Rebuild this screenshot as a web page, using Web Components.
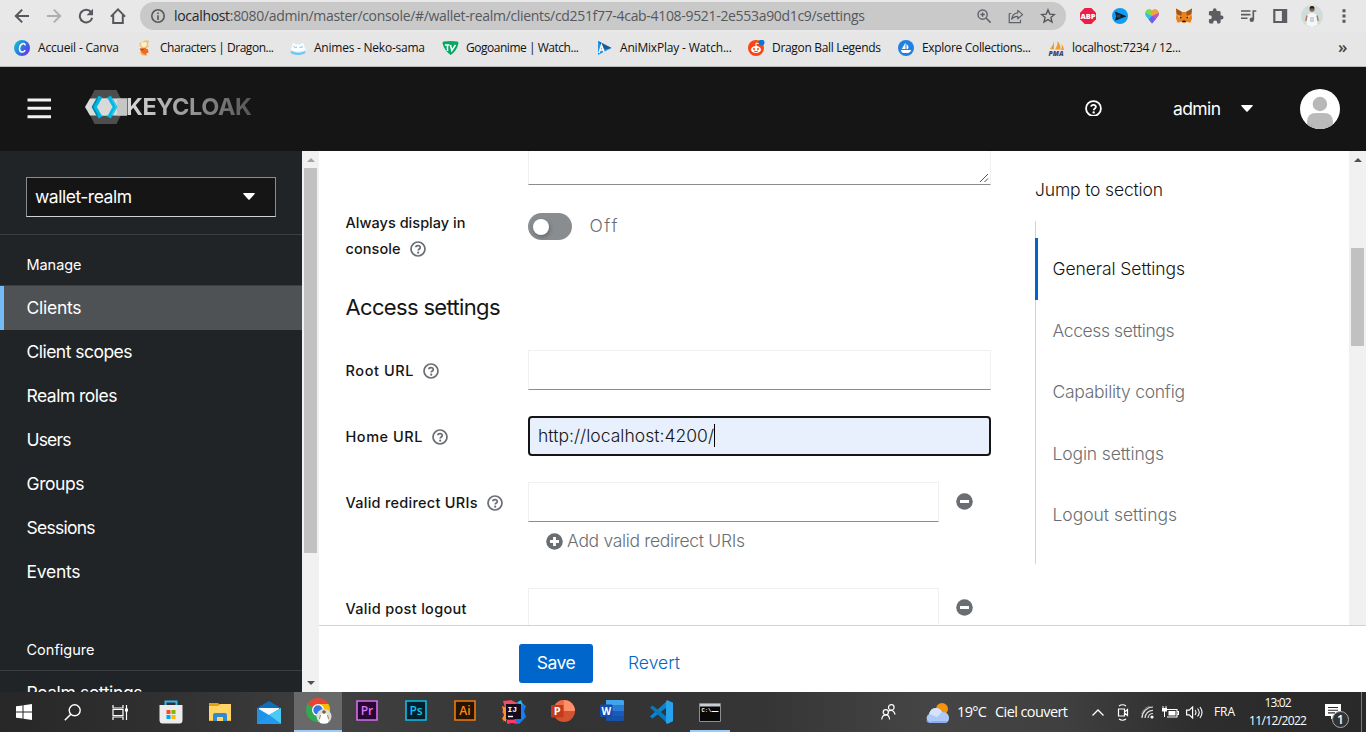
<!DOCTYPE html>
<html lang="en">
<head>
<meta charset="utf-8">
<title>Keycloak Administration UI</title>
<style>
html,body{margin:0;height:732px;overflow:hidden}
body{display:flex;flex-direction:column;width:1366px;background:#fff;font-family:"Open Sans","Noto Sans",sans-serif}
.workspace{display:flex;height:541px;flex:none}
.page{display:flex;flex-direction:column;width:1047px}
.scroll-row{display:flex;height:474px;overflow:hidden}
</style>
</head>
<body>
<browser-toolbar></browser-toolbar>
<bookmark-bar>
  <bookmark-item icon="canva" w="81">Accueil - Canva</bookmark-item>
  <bookmark-item icon="goku" w="114">Characters | Dragon...</bookmark-item>
  <bookmark-item icon="neko" w="111">Animes - Neko-sama</bookmark-item>
  <bookmark-item icon="gogo" w="113">Gogoanime | Watch...</bookmark-item>
  <bookmark-item icon="animix" w="112">AniMixPlay - Watch...</bookmark-item>
  <bookmark-item icon="reddit" w="109">Dragon Ball Legends</bookmark-item>
  <bookmark-item icon="opensea" w="109">Explore Collections...</bookmark-item>
  <bookmark-item icon="pma" w="109">localhost:7234 / 12...</bookmark-item>
</bookmark-bar>
<kc-masthead></kc-masthead>
<div class="workspace">
  <kc-sidebar></kc-sidebar>
  <scroll-bar top="17" thumb="385" full dim></scroll-bar>
  <div class="page">
    <div class="scroll-row">
      <kc-form></kc-form>
      <jump-links></jump-links>
      <scroll-bar top="97" thumb="98"></scroll-bar>
    </div>
    <action-bar></action-bar>
  </div>
</div>
<task-bar></task-bar>
<script>
const ICONS = {
back:[16,16,'<path d="M15 8H2M8.2 1.6 1.8 8l6.4 6.4" fill="none" stroke="#55585c" stroke-width="2"/>'],
forward:[16,16,'<path d="M1 8h13M7.8 1.6 14.2 8l-6.4 6.4" fill="none" stroke="#aeafb1" stroke-width="2"/>'],
reload:[16,16,'<path d="M13.2 4.4A6.3 6.3 0 1 0 14.2 9.8" fill="none" stroke="#55585c" stroke-width="2"/><path d="M15 .8v6.4H8.6z" fill="#55585c"/>'],
home:[16,16,'<path d="M.9 8.6 8 1.4l7.1 7.2M3.2 7v8h9.6V7" fill="none" stroke="#55585c" stroke-width="2"/>'],
info:[16,16,'<circle cx="8" cy="8" r="6.2" fill="none" stroke="#55585c" stroke-width="1.6"/><path d="M7.2 7.2h1.6V12H7.2zM7.2 4.4h1.6V6H7.2z" fill="#55585c"/>'],
zoom:[16,16,'<circle cx="6.6" cy="6.6" r="4.6" fill="none" stroke="#5f6368" stroke-width="1.4"/><path d="M10 10l4.6 4.6M4.4 6.6h4.4M6.6 4.4v4.4" stroke="#5f6368" stroke-width="1.5"/>'],
share:[16,16,'<path d="M1.2 5.5v9.2h11.3v-3M1.2 5.5h2" fill="none" stroke="#5f6368" stroke-width="1.2"/><path d="M9.8 2.4 14.6 6.6 9.8 10.8V8.4C6.8 8.3 5 9.3 3.6 11.2 4 7.6 6.2 5.2 9.8 4.8z" fill="none" stroke="#5f6368" stroke-width="1.2" stroke-linejoin="round"/>'],
star:[16,16,'<path d="m8 1.9 1.8 4.2 4.6.4-3.5 3 1.1 4.5L8 11.6 4 14l1.1-4.5-3.5-3 4.6-.4z" fill="none" stroke="#55585c" stroke-width="1.4"/>'],
abp:[18,16,'<path d="M5.7 0h6.6L17 4.7v6.6L12.3 16H5.7L1 11.3V4.7z" fill="#ed1e45"/><text x="9" y="10.8" font-size="7.4" font-weight="800" font-family="Open Sans,sans-serif" fill="#fff" text-anchor="middle">ABP</text>'],
play:[16,16,'<circle cx="8" cy="8" r="8" fill="#129bf5"/><path d="m3 3.5 11.5 4.7L3 12.8l1.1-4.6z" fill="#101c28"/><path d="M4.5 6.4h4v3.4h-4z" fill="#2b4258"/>'],
heart:[16,16,'<path d="M8 15.5 1.8 8C-.6 4 4.4-1 8 2.7 11.6-1 16.6 4 14.2 8z" fill="#27c3e8"/><path d="M8 2.7C5-.5 1.5 2 1.2 4.8L8 8z" fill="#8dd44b"/><path d="M8 2.7C11-.5 14.8 2 15 5L8 8z" fill="#f2a33c"/><path d="M15 5c.1 2-.9 3.2-1.6 4L8 15.5V8z" fill="#cf4fc7"/><path d="m8 8 4 2.7-4 4.8-3.3-4z" fill="#6d63e8"/>'],
fox:[18,16,'<path d="M1 .5 7 4h4l6-3.5L16.4 6l.7 4-1.6 4.8-4-1-1.3 1.2H7.8l-1.3-1.2-4 1L.9 10l.7-4z" fill="#e8821e"/><path d="M1 .5 7 4 6 8 1.6 6zM17 .5 11 4l1 4 4.4-2z" fill="#a3561f"/><path d="m1.8 7 4.700 1L5 11zM16.200 7l-4.700 1L13 11z" fill="#f5a04c"/><path d="M7.600 12.400h2.800l.4 1.600H7.200zM5 8.600l2 1.200-2 .6zM13 8.600l-2 1.200 2 .6z" fill="#222"/>'],
puzzle:[16,16,'<path d="M13.600 7.600h-1V4.300a1.400 1.400 0 0 0-1.400-1.400H8.600V2.200a1.900 1.900 0 0 0-3.800 0v.7H2.300A1.400 1.400 0 0 0 .9 4.300v2.900h.9a2 2 0 0 1 0 4H.9V14a1.400 1.400 0 0 0 1.400 1.400h2.900v-1a2 2 0 0 1 4 0v1h2a1.400 1.400 0 0 0 1.400-1.400v-2.600h1a1.900 1.900 0 0 0 0-3.800z" fill="#5a5d61"/>'],
music:[17,16,'<path d="M1 3h9.500M1 6.600h9.500M1 10.200h6.500" stroke="#5a5d61" stroke-width="1.600"/><path d="M13.300 11.500V3h3" fill="none" stroke="#5a5d61" stroke-width="1.700"/><circle cx="11.800" cy="11.700" r="2.200" fill="#5a5d61"/>'],
panel:[16,16,'<path d="M1.200 1h14v14h-14zM3.400 3v10h6.500V3z" fill="#5a5d61" fill-rule="evenodd"/>'],
face:[22,22,'<circle cx="11" cy="11" r="11" fill="#cfdcda"/><path d="M5.500 20 6 10.500l3-2.500h4l3 2.500.5 9.500-5.500 2z" fill="#f4f7f8"/><path d="M6 10.500 4.800 16M16 10.500l1.200 5.500" stroke="#a67c62" stroke-width="1.400"/><circle cx="11" cy="4.200" r="2.500" fill="#8c6044"/><path d="M8.500 3.500a2.500 2.500 0 0 1 5 0z" fill="#1b1b1f"/><path d="M9 12h4v5H9z" fill="#cbd3dc"/>'],
dots:[4,16,'<path d="M.5 1.300h3v3h-3zM.5 6.500h3v3h-3zM.5 11.700h3v3h-3z" fill="#55585c"/>'],
canva:[16,16,'<defs><linearGradient id="g" x1="0" x2="1" y1=".3" y2=".9"><stop stop-color="#12bdd2"/><stop offset=".55" stop-color="#356be0"/><stop offset="1" stop-color="#7a28e8"/></linearGradient></defs><circle cx="8" cy="8" r="8" fill="url(#g)"/><path d="M11 5.500c.6-3.200-5-2.500-5.500 2.700-.3 4.300 3.700 5 5.700 2" fill="none" stroke="#fff" stroke-width="1.500"/>'],
goku:[16,16,'<path d="M3 3 6 2.500 8 .800l3-.5 2 1L12 4l.6 2.500L9.500 9 6 8.500 4.500 6.500z" fill="#f0c06a"/><path d="m5 3 3-1 3 .500L10.500 6 8 7.500 5.500 6z" fill="#fdf0d2"/><path d="m4 9 5-1 3 1.500.5 3-2.500 1 1 2-4.500-1.500L5 12z" fill="#ee6a1c"/><path d="m3.500 8.500 5 .3-2.500 2z" fill="#c5401a"/><path d="m3.500 12 3 1 4 2.700-4.500-.5z" fill="#f8b13c"/>'],
neko:[17,16,'<ellipse cx="8" cy="12" rx="7.500" ry="3" fill="#67c9f3"/><path d="M1.500 7 3 2.500l3 2h4l3-2L14.500 7l1.500 3.500q-8 4-15 0z" fill="#fbfeff"/><path d="M3.500 6.500l2 1 1.500-.5M9.500 7l1.500.5 2-1" stroke="#83bedb" fill="none"/><path d="M1 10.500q7 3.500 14.500 0" stroke="#bfe6f7" fill="none"/>'],
gogo:[17,16,'<path d="M1.500 1.600Q8.500.4 15.500 1.600q1.200.4.9 2Q15 11 8.700 15 2.500 11 .6 3.600.4 2 1.500 1.600z" fill="#08a862"/><path d="M3 5h4.500M5.500 5v6M8.500 5l1.300 5.500L13.500 4.800" stroke="#fff" stroke-width="1.500" fill="none"/>'],
animix:[16,16,'<path d="M2 1 15.500 8 2 15z" fill="#1f95ee"/><path d="M2 1 15.500 8 9 9.500z" fill="#1e5990"/><path d="M3 13 5.500 5 8 12M4 10h3.500" stroke="#fff" stroke-width="1.500" fill="none"/>'],
reddit:[17,16,'<circle cx="8" cy="8" r="8" fill="#fb4411"/><ellipse cx="8" cy="9.500" rx="5" ry="3.600" fill="#fff"/><path d="M8 6V3l3 .6" stroke="#fff" fill="none"/><circle cx="6" cy="9" r="1" fill="#fb4411"/><circle cx="10" cy="9" r="1" fill="#fb4411"/><path d="M6 11q2 1.300 4 0" stroke="#fb4411" fill="none"/><circle cx="13.500" cy="2.600" r="3" fill="#0b77d3"/>'],
opensea:[16,16,'<circle cx="8" cy="8" r="8" fill="#2081e2"/><path d="M7.500 2.500V9H3.800zM8.500 4q3 2.500 1.500 5H8.500zM2.800 10h10.400q-1.200 3-3 3H5q-1.700-.5-2.200-3z" fill="#fff"/>'],
pma:[17,16,'<path d="M2 9Q5.500 5 6 1v8.500zM7 9.500Q10 5 9.500 1 13 5 12.500 9.500zM13 10q1.500-3 .5-6 2.500 3 2.500 6z" fill="#f59a2d"/><text x="8" y="15.500" text-anchor="middle" font-size="6.800" font-weight="800" font-style="italic" font-family="Open Sans,sans-serif" fill="#3d4272" textLength="15" lengthAdjust="spacingAndGlyphs">PMA</text>'],
burger:[24,21,'<path d="M.5 2H24M.5 10.300H24M.5 18.700H24" stroke="#f2f2f2" stroke-width="3"/>'],
logo:[42,34,'<path d="M9.500 0h22L40 17l-8.500 17h-22L1 17z" fill="#4d4d4d"/><path d="M5 8.500h37v17H5L0 17z" fill="#dcdcdc"/><path d="M32 8.500h10v17H32z" fill="#c6c6c6"/><path d="m12 17 5-8.500h9L31 17l-5 8.500h-9z" fill="#d9d9d9"/><path d="m15.500 6.500-6 10.500 6 10.500" fill="none" stroke="#00b8e3" stroke-width="4.200"/><path d="m12.500 8-5 9 5 9" stroke="#008aaa" stroke-width="1.600" fill="none"/><path d="m24 6.500 6 10.500-6 10.500" fill="none" stroke="#00b8e3" stroke-width="4.200"/><path d="m27 9 4.500 8-4.500 8" stroke="#33c6e9" stroke-width="1.600" fill="none"/>'],
help:[16,16,'<circle cx="8" cy="8" r="7" fill="none" stroke="currentColor" stroke-width="1.700"/><path d="M5.800 6.300C6 4 10.400 4 10.300 6.600 10.200 8 8.200 8 8.200 9.600" fill="none" stroke="currentColor" stroke-width="1.700"/><circle cx="8.200" cy="11.700" r="1.100" fill="currentColor"/>'],
caret:[12,7,'<path d="M.8 0h10.400q1 .2.400 1L6.700 6.600q-.7.500-1.400 0L.4 1Q-.2.200.8 0z" fill="#fff"/>'],
avatar:[40,40,'<defs><clipPath id="c"><circle cx="20" cy="20" r="20"/></clipPath></defs><g clip-path="url(#c)"><path d="M0 0h40v40H0z" fill="#fff"/><path d="M7 40V33q0-9 9-9h8q9 0 9 9v7z" fill="#bbb"/><path d="M13 33l-2 4 3 4h-4zM27 33l2 4-3 4h4z" fill="#a6a6a6"/><circle cx="20" cy="15" r="7.200" fill="#b8b8b8"/><path d="M15 10a7 7 0 0 0 1 11 8 8 0 0 1-1-11" fill="#aaa"/></g>'],
minus:[17,17,'<circle cx="8.500" cy="8.500" r="8.300" fill="#6a6e73"/><path d="M4 8.500h9" stroke="#fff" stroke-width="3"/>'],
plus:[17,17,'<circle cx="8.500" cy="8.500" r="8.300" fill="#6a6e73"/><path d="M4 8.500h9M8.500 4v9" stroke="#fff" stroke-width="2.800"/>'],
grip:[10,10,'<path d="M1 9 9 1M5.500 9 9 5.500" stroke="#555" stroke-width="1"/>'],
start:[16,16,'<path d="M0 2.300 6.500 1.400V7.500H0zM7.500 1.200 16 0v7.500H7.500zM0 8.500h6.500v6.100L0 13.700zM7.500 8.500H16V16l-8.500-1.200z" fill="#fff"/>'],
search:[17,17,'<circle cx="10.700" cy="6.300" r="5.500" fill="none" stroke="#fff" stroke-width="1.400"/><path d="M6.800 10.200.8 16.200" stroke="#fff" stroke-width="1.500"/>'],
taskview:[17,17,'<path d="M1 1v3h10V1M1 16v-3h10v3M1 5.500v6h10v-6zM14.500 1v15" fill="none" stroke="#fff" stroke-width="1.200"/><path d="M13 4.500h3v3h-3z" fill="#fff"/>'],
store:[24,24,'<path d="M6.500 7V1.500h11V7" fill="none" stroke="#32b8f2" stroke-width="2"/><path d="M.5 5h23v15q0 3.500-3 3.500h-17q-3 0-3-3.500z" fill="#ececec"/><path d="M7.500 10h4v4h-4z" fill="#f25022"/><path d="M12.500 10h4v4h-4z" fill="#7fba00"/><path d="M7.500 15h4v4h-4z" fill="#00a4ef"/><path d="M12.500 15h4v4h-4z" fill="#ffb900"/>'],
explorer:[22,18,'<path d="M0 0h9l2 2h11v3H0z" fill="#e39f0c"/><path d="M0 3h9l2-2h11v17H0z" fill="#fed566"/><path d="M4 18v-6q0-2 2-2h10q2 0 2 2v6h-4v-4H8v4z" fill="#2e8bd3"/><path d="M0 17h4v1H0zM18 17h4v1h-4z" fill="#f2b833"/>'],
mail:[24,23,'<path d="M0 7 12 0l12 7v4H0z" fill="#0f6dba"/><path d="M2 7h20v8H2z" fill="#f5f9fc"/><path d="M0 7 12 14 24 7v16H0z" fill="#1f91e6"/><path d="m24 7-12 7 12 9z" fill="#4acbf5"/><path d="M0 23 12 14l12 9z" fill="#2299ef"/>'],
chrome:[26,26,'<circle cx="12" cy="12" r="12" fill="#33a852"/><path d="M12 12 1.600 6A12 12 0 0 1 22.400 6z" fill="#ea4335"/><path d="M12 6h10.400A12 12 0 0 1 12 24l5.200-9z" fill="#fbbc05"/><circle cx="12" cy="12" r="6" fill="#fff"/><circle cx="12" cy="12" r="4.700" fill="#3577e5"/><circle cx="18" cy="18.500" r="7.500" fill="#d7dfde"/><path d="M14 25v-8l3-2h2l3 2v8z" fill="#fff"/><path d="m14.500 17-1 4M21.500 17l1 4" stroke="#a67c62"/><circle cx="18" cy="14" r="1.800" fill="#80573f"/>'],
pr:[22,21,'<path d="M1 1h20v19H1z" fill="#2a0634" stroke="#d46df0" stroke-width="1.600"/><text x="11" y="15" text-anchor="middle" font-size="12" font-weight="600" font-family="Open Sans,sans-serif" fill="#d978f5">Pr</text>'],
ps:[22,21,'<path d="M1 1h20v19H1z" fill="#021f2b" stroke="#0dbce8" stroke-width="1.600"/><text x="11" y="15" text-anchor="middle" font-size="12" font-weight="600" font-family="Open Sans,sans-serif" fill="#12c4f3">Ps</text>'],
ai:[22,21,'<path d="M1 1h20v19H1z" fill="#261300" stroke="#ef7b0b" stroke-width="1.600"/><text x="11" y="15" text-anchor="middle" font-size="12" font-weight="600" font-family="Open Sans,sans-serif" fill="#ff860f">Ai</text>'],
ij:[24,24,'<path d="m1 1 8-1 6 3-5 12-9 7 2-6-3-4 3-4z" fill="#f34a66"/><path d="m0 6 5 2-1 14-4-3 2-4z" fill="#ff9029"/><path d="m17 1 7 5-2 5 2 6-7 7-5-3z" fill="#137ef0"/><path d="m5 20 8 0 3 4-6-1-5 1z" fill="#ff386a"/><path d="m14 3 5-3 2 5z" fill="#29b5f8"/><path d="M4 4h15v15H4z" fill="#150c1b"/><text x="5.500" y="11.500" font-size="8" font-weight="700" font-family="Liberation Mono,monospace" fill="#fff">IJ</text><path d="M6 16.500h5" stroke="#fff" stroke-width="1.400"/>'],
ppt:[24,22,'<circle cx="13" cy="11" r="11" fill="#d35230"/><path d="M13 0a11 11 0 0 1 11 11H13z" fill="#ff8f6b"/><path d="M2 11h11V0A11 11 0 0 0 2 11z" fill="#ed6c47"/><rect y="5" width="12.500" height="12.500" rx="1" fill="#c23b1d"/><text x="6.300" y="15.200" text-anchor="middle" font-size="11" font-weight="700" font-family="Open Sans,sans-serif" fill="#fff">P</text>'],
word:[24,21,'<rect x="6" width="18" height="21" rx="1.500" fill="#1651aa"/><path d="M6 0h17l1 1v4.500H6z" fill="#41a5ee"/><path d="M6 5.500h18V11H6z" fill="#2b7cd3"/><path d="M6 11h18v5H6z" fill="#185abd"/><rect y="4.500" width="12.500" height="12.500" rx="1" fill="#154baa"/><text x="6.300" y="14.500" text-anchor="middle" font-size="10" font-weight="700" font-family="Open Sans,sans-serif" fill="#fff">W</text>'],
code:[24,24,'<path d="M1 16.500 18 1v6L3.500 18.500z" fill="#0a86d0"/><path d="M1 7.500 3.500 5.500 18 17v6z" fill="#0878bf"/><path d="m18 0 6 2.800v18.400L18 24l-1-1.500v-21z" fill="#27a2ee"/>'],
cmd:[22,19,'<path d="M.5.500h21v18H.5z" fill="#080808" stroke="#8d8d8d"/><path d="M1 1h20v2.500H1z" fill="#c9ced3"/><text x="2.500" y="8.800" font-size="5.500" font-weight="700" font-family="Liberation Mono,monospace" fill="#fff">C:\\</text><path d="M12.500 8.500h7" stroke="#fff"/>'],
people:[15,16,'<circle cx="10.300" cy="3.400" r="2.800" fill="none" stroke="#fff" stroke-width="1.200"/><circle cx="4.800" cy="8.300" r="2.600" fill="none" stroke="#fff" stroke-width="1.200"/><path d="M7.500 7q5-2.200 6.600 3.500M.7 15.500q.5-4.600 4.300-4.600 3.200 0 3.600 4.600" fill="none" stroke="#fff" stroke-width="1.200"/>'],
weather:[24,20,'<circle cx="17" cy="6" r="6" fill="#f6930c"/><path d="M5 20a5 5 0 0 1-1-9Q6 4 12 5q4 1 5 4 6 0 7 5 .5 6-5 6z" fill="#adc9f7"/><path d="M4 11q2-7 8-6 4 1 5 4l-5 5z" fill="#d4e4fd"/><path d="M1 17q3 3 7 1h15q-1 2-4 2H5q-3 0-4-3" fill="#8aadee"/>'],
up:[12,7,'<path d="m.5 6.500 5.500-5.500 5.500 5.500" fill="none" stroke="#fff" stroke-width="1.300"/>'],
meet:[12,17,'<path d="M1.500 5h6v7h-6zM7.500 8l3-2.500v6l-3-2.500M2 2q3.500-2.500 7 0M2 15q3.500 2.500 7 0" fill="none" stroke="#fff" stroke-width="1.200"/>'],
wifi:[13,13,'<path d="M1 12A11 11 0 0 1 12 1M4 12A8 8 0 0 1 12 4.300M7 12A5 5 0 0 1 12 7.500" fill="none" stroke="#ddd" stroke-width="1.200"/><path d="M.5 8A12 12 0 0 1 9 0" fill="none" stroke="#888" stroke-width=".8"/><circle cx="11" cy="11" r="1.600" fill="#fff"/>'],
battery:[17,12,'<path d="M5 3.500h10v7.500H5M15 5.500h1.500v3H15" fill="none" stroke="#fff" stroke-width="1.100"/><path d="M6.500 5h7v4.500h-7zM0 2h5v3.500H0z" fill="#fff"/><path d="M1 2V0M4 2V0M2.500 5v6" stroke="#fff"/>'],
sound:[17,13,'<path d="M.6 4.200h2.600L6.600 1v11L3.200 8.800H.6z" fill="none" stroke="#fff" stroke-width="1.200"/><path d="M9 4q2 2.500 0 5M11.500 2.500q3.500 4 0 8M14 1q4 5.500 0 11" fill="none" stroke="#fff" stroke-width="1.100"/>'],
notify:[16,16,'<path d="M0 0h16v12h-6.500L6 15.500V12H0z" fill="#fff"/><path d="M3 3.500h10M3 6.200h10M3 8.900h7" stroke="#2b2b2b" stroke-width="1.100"/>']
};

const UI_FONT='font-family:"Inter","Open Sans",sans-serif;';
const CHROME_FONT='font-family:"Open Sans","Noto Sans",sans-serif;';
const fitted=new Set();
function define(name, markup){
  customElements.define(name, class extends HTMLElement{
    constructor(){ super(); this.attachShadow({mode:'open'}); }
    connectedCallback(){
      if(this.shadowRoot.childNodes.length) return;
      const t=document.createElement('template');
      t.innerHTML=typeof markup==='function'?markup(this):markup;
      this.shadowRoot.append(t.content.cloneNode(true));
    }
  });
}

define('ui-icon', el=>{
  const [w,h,body]=ICONS[el.getAttribute('name')];
  const s=+(el.getAttribute('scale')||1);
  return `<style>:host{display:inline-block;flex:none;width:${w*s}px;height:${h*s}px;line-height:0}svg{display:block}</style><svg width="${w*s}" height="${h*s}" viewBox="0 0 ${w} ${h}">${body}</svg>`;
});

/* Text set to a fixed measure; the tracking is worked out from its natural width. */
customElements.define('fit-text', class extends HTMLElement{
  constructor(){
    super();
    this.attachShadow({mode:'open'}).innerHTML='<style>:host{display:inline-block;white-space:pre;flex:none}</style><slot></slot>';
  }
  connectedCallback(){ fitted.add(this); }
  fit(){
    const w=+this.getAttribute('w'), n=this.textContent.length;
    const natural=this.getBoundingClientRect().width;
    this.style.letterSpacing=((w-natural)/(n-1)).toFixed(3)+'px';
    this.style.width=w+'px';
  }
});

define('browser-toolbar', `<style>
:host{display:grid;grid-template-columns:repeat(4,32px) 938px repeat(9,32px);padding:0 6px;align-items:center;justify-items:center;background:#e8e8e8;box-sizing:border-box;height:32px;flex:none;${CHROME_FONT}}
.url{display:flex;align-items:center;width:926px;height:28px;border-radius:14px;background:#c9c9c9;box-sizing:border-box;padding:0 10px;font-size:14px;color:#55585c}
.url fit-text{margin-left:8px;margin-right:auto;line-height:26px;padding-bottom:1px}
.url b{font-weight:400;color:#25272a}
.acts{display:flex;gap:16px}
</style><ui-icon name="back"></ui-icon><ui-icon name="forward"></ui-icon><ui-icon name="reload"></ui-icon><ui-icon name="home"></ui-icon>
<div class="url"><ui-icon name="info"></ui-icon><fit-text w="691"><b>localhost</b>:8080/admin/master/console/#/wallet-realm/clients/cd251f77-4cab-4108-9521-2e553a90d1c9/settings</fit-text><span class="acts"><ui-icon name="zoom"></ui-icon><ui-icon name="share"></ui-icon><ui-icon name="star"></ui-icon></span></div>
<ui-icon name="abp"></ui-icon><ui-icon name="play"></ui-icon><ui-icon name="heart"></ui-icon><ui-icon name="fox"></ui-icon><ui-icon name="puzzle"></ui-icon><ui-icon name="music"></ui-icon><ui-icon name="panel"></ui-icon><ui-icon name="face"></ui-icon><ui-icon name="dots"></ui-icon>`);

define('bookmark-bar', `<style>
:host{display:grid;grid-template-columns:122px 154px 152px 154px 152px 150px 150px 290px auto;align-items:center;height:35px;flex:none;padding-left:14px;background:#e6e6e6;border-bottom:1px solid #b9b9b9;box-sizing:border-box;font-size:12px;color:#111;${CHROME_FONT}}
.more{font-size:17px;color:#444;line-height:20px;margin-top:-4px;font-weight:600}
</style><slot></slot><span class="more">»</span>`);
define('bookmark-item', el=>`<style>:host{display:flex;align-items:center;height:32px;margin-top:-2px}ui-icon{width:16px}fit-text{margin-left:8px;line-height:16px;padding-bottom:1px}</style><ui-icon name="${el.getAttribute('icon')}"></ui-icon><fit-text w="${el.getAttribute('w')}">${el.textContent}</fit-text>`);

define('kc-masthead', `<style>
:host{display:flex;align-items:center;height:84px;flex:none;background:#151515;box-sizing:border-box;padding:0 26px 1px 27px;color:#fff;${UI_FONT}font-size:17.5px}
.brand{display:flex;align-items:center;margin:-4px auto 0 34px}
.name{font:700 23.5px/34px "Inter","Open Sans",sans-serif;color:transparent;background:linear-gradient(90deg,#dcdcdc,#555);-webkit-background-clip:text;background-clip:text;margin-left:-1px}
.help{margin-right:71px;margin-top:-1px}
.user{display:flex;align-items:center;gap:20px;margin-right:47px;font-weight:400}
ui-icon[name=avatar]{margin-top:1px}
</style><ui-icon name="burger"></ui-icon><div class="brand"><ui-icon name="logo"></ui-icon><fit-text class="name" w="126">KEYCLOAK</fit-text></div>
<ui-icon class="help" name="help" scale="1.06"></ui-icon><div class="user"><fit-text w="48">admin</fit-text><ui-icon name="caret"></ui-icon></div><ui-icon name="avatar"></ui-icon>`);

define('kc-sidebar', `<style>
:host{display:flex;flex-direction:column;width:302px;height:541px;overflow:hidden;background:#212427;flex:none;color:#fff;${UI_FONT}}
.realm{display:flex;justify-content:space-between;align-items:center;box-sizing:border-box;width:250px;height:40px;margin:26px 0 17px 26px;padding:0 20px 1px 8px;background:#151515;border:1px solid #8a8d90;border-bottom-color:#d2d2d2;font-size:17.5px;flex:none}
.head{box-sizing:border-box;height:51px;padding:19px 0 0 26.5px;font-size:14.500px;line-height:22px;flex:none;border-bottom:1px solid #3c3f42}
.first{border-top:1px solid #3c3f42;height:52px}
.gap{height:34px;flex:none}
.cfg{height:43px;padding-top:11px}
</style>
<div class="realm"><fit-text w="97">wallet-realm</fit-text><ui-icon name="caret"></ui-icon></div>
<div class="head first"><fit-text w="55">Manage</fit-text></div>
<kc-nav-item w="55" current>Clients</kc-nav-item><kc-nav-item w="106">Client scopes</kc-nav-item><kc-nav-item w="91">Realm roles</kc-nav-item><kc-nav-item w="45">Users</kc-nav-item><kc-nav-item w="58">Groups</kc-nav-item><kc-nav-item w="69">Sessions</kc-nav-item><kc-nav-item w="54">Events</kc-nav-item>
<div class="gap"></div><div class="head cfg"><fit-text w="68">Configure</fit-text></div><kc-nav-item w="116">Realm settings</kc-nav-item>`);
define('kc-nav-item', el=>`<style>:host{display:block;height:44px;box-sizing:border-box;padding-left:26.500px;flex:none;font-size:17.500px;line-height:44px}:host([current]){background:#4f5255;border-left:4px solid #73bcf7;padding-left:22.500px}</style><fit-text w="${el.getAttribute('w')}">${el.textContent}</fit-text>`);

define('scroll-bar', el=>{
  const full=el.hasAttribute('full'), dim=el.hasAttribute('dim');
  return `<style>:host{display:flex;flex-direction:column;width:17px;height:${full?541:474}px;background:#f1f1f1;flex:none;align-items:center}
svg{display:block;flex:none;margin-top:7px}.thumb{width:13px;height:${el.getAttribute('thumb')}px;margin-top:${+el.getAttribute('top')-11}px;background:#c1c1c1;flex:none}.down{margin-top:auto;margin-bottom:7px}</style>
<svg width="8" height="4"><path d="M0 4h8L4 0z" fill="${dim?'#a3a3a3':'#505050'}"/></svg><div class="thumb"></div>${full?'<svg class="down" width="8" height="4"><path d="M0 0h8L4 4z" fill="#505050"/></svg>':''}`;
});

define('kc-input', `<style>:host{display:flex;align-items:center;box-sizing:border-box;width:463px;height:40px;border:1px solid #f0f0f0;border-bottom-color:#8a8d90;padding-left:9px;font-weight:300;font-size:17.500px;color:#151515;background:#fff;flex:none}
:host([short]){width:411px}:host([area]){height:34px;border-top:0;align-items:flex-end;justify-content:flex-end;padding:0 1px 1px 0}:host([focused]){border:2px solid #151515;border-radius:4px;background:#e8f0fe;padding:0 0 1px 8px}</style><slot></slot>`);
define('kc-switch', `<style>:host{display:flex;align-items:center;gap:17.500px;height:27px;color:#6a6e73;font-weight:300;font-size:17.500px}.track{display:flex;align-items:center;width:44px;height:27px;border-radius:14px;background:#8a8d90;padding-left:5px;box-sizing:border-box}.knob{width:16px;height:16px;border-radius:50%;background:#fff;box-shadow:1px 2px 4px #0004}.text{margin-top:-2px}</style><div class="track"><div class="knob"></div></div><div class="text"><slot></slot></div>`);
define('kc-label', `<style>:host{display:block;width:182.500px;margin-left:-.5px;flex:none;font-size:14.500px;line-height:26px;font-weight:500;color:#151515}</style><slot></slot>`);

define('kc-form', `<style>
:host{display:block;width:716px;height:474px;overflow:hidden;box-sizing:border-box;padding-left:27px;${UI_FONT};background:#fff;flex:none}
.row{display:flex;height:66px;align-items:flex-start}
.row kc-label{padding-top:7.500px}
.ta{height:62px}.ta kc-input{margin-left:182px}
.sw{height:80px}.sw kc-label{padding-top:0;margin-top:-3px}
h2{margin:-1px 0 0 -.5px;height:58px;font-size:22px;line-height:30px;color:#151515;font-weight:400}
.l{display:flex;align-items:center;height:26px}.l ui-icon{color:#6a6e73;margin-left:9px}
.redirect{height:106px}.col{display:flex;flex-direction:column}
.add{display:flex;align-items:center;height:38px;padding-left:18px;gap:4px;font-size:17.500px;font-weight:300;color:#6a6e73}
.add fit-text{margin-top:-2px}
.minus{margin:10.500px 0 0 17px}
.cursor{width:1px;height:23px;background:#000}
</style>
<div class="row ta"><kc-input area><ui-icon name="grip"></ui-icon></kc-input></div>
<div class="row sw"><kc-label><div class="l"><fit-text w="120">Always display in</fit-text></div><div class="l"><fit-text w="55">console</fit-text><ui-icon name="help"></ui-icon></div></kc-label><kc-switch><fit-text w="28">Off</fit-text></kc-switch></div>
<h2><fit-text w="155">Access settings</fit-text></h2>
<div class="row"><kc-label><div class="l"><fit-text w="68">Root URL</fit-text><ui-icon name="help"></ui-icon></div></kc-label><kc-input></kc-input></div>
<div class="row"><kc-label><div class="l"><fit-text w="77">Home URL</fit-text><ui-icon name="help"></ui-icon></div></kc-label><kc-input focused><fit-text w="176">http://localhost:4200/</fit-text><span class="cursor"></span></kc-input></div>
<div class="row redirect"><kc-label><div class="l"><fit-text w="132">Valid redirect URIs</fit-text><ui-icon name="help"></ui-icon></div></kc-label><div class="col"><kc-input short></kc-input><div class="add"><ui-icon name="plus"></ui-icon><fit-text w="178">Add valid redirect URIs</fit-text></div></div><ui-icon class="minus" name="minus"></ui-icon></div>
<div class="row"><kc-label><div class="l"><fit-text w="121">Valid post logout</fit-text></div></kc-label><kc-input short></kc-input><ui-icon class="minus" name="minus"></ui-icon></div>`);

define('jump-links', `<style>
:host{display:block;width:314px;flex:none;${UI_FONT}font-size:17.500px;font-weight:300;color:#151515}
.t{height:70px;box-sizing:border-box;padding-top:26px;line-height:26px}
.list{box-sizing:border-box;height:343px;border-left:1px solid #d2d2d2;padding-top:17px;color:#6a6e73}
.i{height:61.500px;line-height:61.500px;padding-left:16.500px}
.on{border-left:3px solid #06c;margin-left:-1px;padding-left:14.500px;color:#151515}
</style><div class="t"><fit-text w="128">Jump to section</fit-text></div><div class="list"><div class="i on"><fit-text w="132.500">General Settings</fit-text></div><div class="i"><fit-text w="122">Access settings</fit-text></div><div class="i"><fit-text w="132.500">Capability config</fit-text></div><div class="i"><fit-text w="111.500">Login settings</fit-text></div><div class="i"><fit-text w="124.500">Logout settings</fit-text></div></div>`);

define('action-bar', `<style>:host{display:flex;box-sizing:border-box;height:67px;border-top:1px solid #d2d2d2;padding:18px 0 0 200px;background:#fff;${UI_FONT}font-size:17.500px}
.save{width:74px;height:39px;border-radius:3px;background:#06c;color:#fff;text-align:center;line-height:38px}.revert{margin-left:35px;color:#06c;line-height:38px;font-weight:300}</style>
<div class="save"><fit-text w="39">Save</fit-text></div><div class="revert"><fit-text w="52">Revert</fit-text></div>`);

define('task-bar', `<style>
:host{display:flex;height:40px;flex:none;background:linear-gradient(90deg,#272727 0,#303030 160px,#404040 340px,#333 560px,#353535 760px,#454545 930px,#404040 1060px,#2d2d2d 1200px,#292929);color:#fff;${CHROME_FONT}font-size:12px}
.c{display:flex;align-items:center;justify-content:center;width:48px;height:40px;box-sizing:border-box;flex:none}
.a{width:49px;padding-bottom:3px}
.flat{padding:0}
.apps{display:flex;padding-left:2px;width:588px}
.chrome{width:48px;margin-left:1px;background:#696969;border-bottom:2px solid #9dccf5;padding:0 0 0 2px}
.cmd{position:relative}.cmd::after{content:"";position:absolute;left:5px;right:4px;bottom:0;height:2px;background:#9dccf5}
.tray{display:flex;align-items:center;margin-left:147px}
.tray>*{flex:none}
.w{font-size:14.500px;padding-bottom:1px}
.clock{width:58px;margin-left:14px;display:flex;flex-direction:column;align-items:center;line-height:18px;padding-bottom:1px}
.n{position:relative;height:16px;margin-left:18px}
.badge{position:absolute;left:7px;top:7px;width:15px;height:15px;border:1px solid #aaa;border-radius:50%;background:#333;line-height:15px;text-align:center;font-size:12px;font-weight:600}
.edge{width:1px;height:40px;background:#777;margin-left:20px}
</style>
<div class="c"><ui-icon name="start"></ui-icon></div><div class="c"><ui-icon name="search"></ui-icon></div><div class="c"><ui-icon name="taskview"></ui-icon></div>
<div class="apps"><div class="c a flat"><ui-icon name="store"></ui-icon></div><div class="c a flat"><ui-icon name="explorer"></ui-icon></div><div class="c a flat"><ui-icon name="mail"></ui-icon></div><div class="c a chrome"><ui-icon name="chrome"></ui-icon></div><div class="c a"><ui-icon name="pr"></ui-icon></div><div class="c a"><ui-icon name="ps"></ui-icon></div><div class="c a"><ui-icon name="ai"></ui-icon></div><div class="c a flat"><ui-icon name="ij"></ui-icon></div><div class="c a"><ui-icon name="ppt"></ui-icon></div><div class="c a"><ui-icon name="word"></ui-icon></div><div class="c a flat"><ui-icon name="code"></ui-icon></div><div class="c a flat cmd"><ui-icon name="cmd"></ui-icon></div></div>
<div class="tray"><ui-icon name="people"></ui-icon><ui-icon name="weather" style="margin:2px 8px 0 29px"></ui-icon><fit-text class="w" w="30">19°C</fit-text><fit-text class="w" w="73" style="margin-left:8px">Ciel couvert</fit-text><ui-icon name="up" style="margin-left:24px"></ui-icon><ui-icon name="meet" style="margin-left:13px"></ui-icon><ui-icon name="wifi" style="margin-left:12px"></ui-icon><ui-icon name="battery" style="margin-left:8px"></ui-icon><ui-icon name="sound" style="margin-left:7px"></ui-icon><fit-text w="21" style="margin-left:11px;padding-bottom:1px">FRA</fit-text><div class="clock"><fit-text w="27">13:02</fit-text><fit-text w="58">11/12/2022</fit-text></div><div class="n"><ui-icon name="notify"></ui-icon><span class="badge">1</span></div><div class="edge"></div></div>`);

fitted.forEach(t=>t.fit());
</script>
</body>
</html>
